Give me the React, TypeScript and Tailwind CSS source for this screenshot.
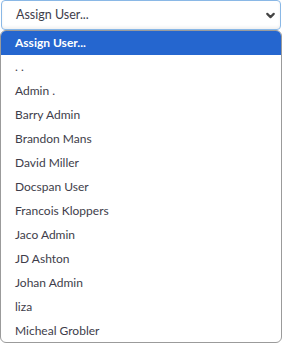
import { ChevronDown } from 'lucide-react';

const users = [
  '. .',
  'Admin .',
  'Barry Admin',
  'Brandon Mans',
  'David Miller',
  'Docspan User',
  'Francois Kloppers',
  'Jaco Admin',
  'JD Ashton',
  'Johan Admin',
  'liza',
  'Micheal Grobler',
];

export default function App() {
  return (
    <div className="w-[282px] h-[344px] bg-white relative text-[12px] text-[#3e3d4a]" style={{ fontFamily: 'Lato, "Open Sans", sans-serif' }}>
      {/* select */}
      <div className="h-[30px] mx-[1px] border border-[#8ab8e6] rounded-[4px] bg-white flex items-center justify-between pl-[14px] pr-[3px] shadow-[inset_0_-2px_3px_rgba(0,0,0,0.06)]">
        <span className="text-[12.5px]">Assign User...</span>
        <ChevronDown className="w-[13px] h-[13px] text-[#444]" strokeWidth={4} />
      </div>
      {/* options list */}
      <div className="absolute left-0 top-[30px] w-[282px] h-[313px] border border-[#9b9b9b] rounded-[6px] bg-white overflow-hidden">
        <div className="h-[24px] bg-[#2566cf] text-white font-bold flex items-center pl-[14px]">Assign User...</div>
        {users.map((u) => (
          <div key={u} className="h-[24px] flex items-center pl-[14px]">
            {u}
          </div>
        ))}
      </div>
    </div>
  );
}
